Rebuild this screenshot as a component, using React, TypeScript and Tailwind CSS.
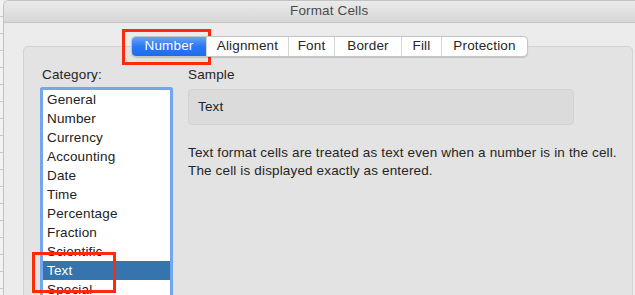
const categories = [
  'General',
  'Number',
  'Currency',
  'Accounting',
  'Date',
  'Time',
  'Percentage',
  'Fraction',
  'Scientific',
  'Text',
  'Special',
];

const tabs = [
  { label: 'Number', width: 'w-[74px]' },
  { label: 'Alignment', width: 'w-[82px]' },
  { label: 'Font', width: 'w-[46px]' },
  { label: 'Border', width: 'w-[67px]' },
  { label: 'Fill', width: 'w-[40px]' },
  { label: 'Protection', width: 'w-[86px]' },
];

function TabBar() {
  return (
    <div className="relative z-10 ml-[108px] flex h-[21px] w-fit overflow-hidden rounded-[5px] border border-[#c6c6c6] bg-white shadow-[0_0.5px_1px_rgba(0,0,0,0.15)]">
      {tabs.map((t, i) => (
        <div
          key={t.label}
          className={
            i === 0
              ? `${t.width} flex items-center justify-center bg-[linear-gradient(#6aa4f6,#2a78f2_50%,#1c6cf0)] text-white`
              : `${t.width} flex items-center justify-center border-l border-[#d4d4d4] text-[#262626]`
          }
        >
          {t.label}
        </div>
      ))}
    </div>
  );
}

export default function App() {
  return (
    <div className="relative flex h-[295px] w-[635px] overflow-hidden bg-[#ececec] font-['Liberation_Sans',Arial,sans-serif] text-[13.5px] tracking-[0.15px] text-[#252525]">
      {/* sheet behind the dialog */}
      <div className="w-[3px] shrink-0 bg-[repeating-linear-gradient(#f2f2f2_0px,#f2f2f2_16px,#c8c8c8_16px,#c8c8c8_17px)]" />

      <div className="flex flex-1 flex-col overflow-hidden rounded-tl-[6px] border-l border-t border-[#c2c2c2] bg-[#ececec]">
        {/* title bar */}
        <div className="flex h-[22px] shrink-0 items-center border-b border-[#c4c4c4] bg-[linear-gradient(#ebebeb,#d7d7d7)] pl-[286px] text-[#4a4a4a]">
          Format Cells
        </div>

        <div className="flex flex-1 flex-col pl-[19px] pr-[2px] pt-[13px]">
          <TabBar />

          <div className="-mt-[11px] flex flex-1 gap-[15px] rounded-t-[5px] border border-[#d2d2d2] bg-[#e3e3e3] pl-[16px] pt-[20px]">
            {/* category list */}
            <div className="flex w-[133px] flex-col">
              <div className="ml-[2px] h-[16px] leading-[16px]">Category:</div>
              <div className="mt-[4px] flex-1 rounded-t-[3px] border-[3px] border-b-0 border-[#74a6ee] bg-white">
                {categories.map((c) => (
                  <div
                    key={c}
                    className={
                      c === 'Text'
                        ? 'h-[19px] bg-[#3674ad] pl-[4px] leading-[20px] text-white'
                        : 'h-[19px] pl-[4px] leading-[20px] text-[#222]'
                    }
                  >
                    {c}
                  </div>
                ))}
              </div>
            </div>

            {/* sample + description */}
            <div className="flex flex-col">
              <div className="h-[16px] leading-[16px]">Sample</div>
              <div className="mt-[6px] flex h-[36px] w-[386px] items-center rounded-[4px] border border-[#d2d2d2] bg-[#dbdbdb] pl-[9px]">
                Text
              </div>
              <div className="mt-[19px] leading-[18px]">
                <div>Text format cells are treated as text even when a number is in the cell.</div>
                <div>The cell is displayed exactly as entered.</div>
              </div>
            </div>
          </div>
        </div>
      </div>

      {/* annotation boxes */}
      <div className="absolute left-[122px] top-[29px] h-[36px] w-[89px] border-[3px] border-[#fd2a0c]" />
      <div className="absolute left-[32px] top-[252px] h-[41px] w-[84px] border-[3px] border-[#fd2a0c]" />
    </div>
  );
}
